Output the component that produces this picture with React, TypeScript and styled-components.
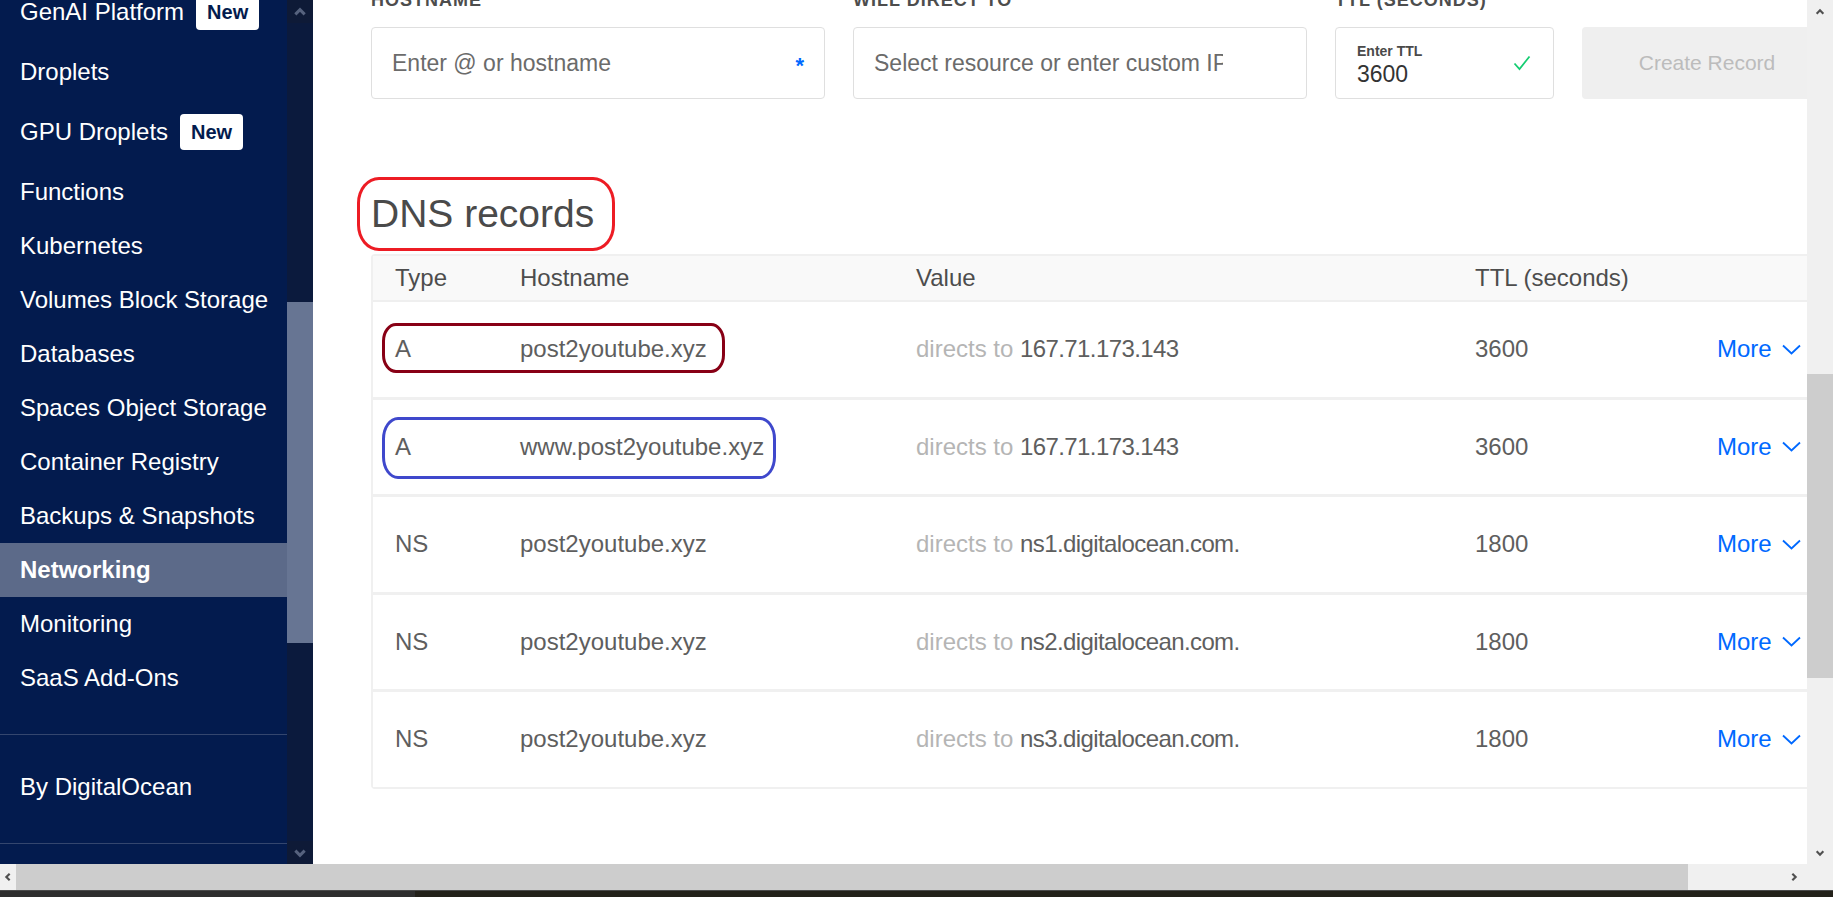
import React from "react";
import styled, { createGlobalStyle } from "styled-components";

const GlobalStyle = createGlobalStyle`
  html, body { margin: 0; padding: 0; width: 100%; height: 100%; overflow: hidden; }
  body { font-family: "Liberation Sans", Arial, sans-serif; background: #ffffff; }
  #root { height: 100%; }
  * { box-sizing: border-box; }
`;

const Screen = styled.div`
  width: 1833px;
  height: 897px;
  display: grid;
  grid-template-rows: 864px 26px 7px;
  overflow: hidden;
`;

const Top = styled.div`
  display: flex;
  min-height: 0;
  overflow: hidden;
`;

/* ---------- Sidebar ---------- */
const Sidebar = styled.nav`
  width: 287px;
  flex: none;
  background: #031b4e;
  color: #ffffff;
  overflow: hidden;
  display: flex;
  flex-direction: column;
`;

const NavList = styled.div`
  margin-top: -21px;
  display: flex;
  flex-direction: column;
  margin-bottom: 29px;
`;

const NavItem = styled.div<{ $tall?: boolean; $active?: boolean }>`
  height: ${(p) => (p.$tall ? 66 : 54)}px;
  flex: none;
  display: flex;
  align-items: center;
  padding-left: 20px;
  font-size: 24px;
  white-space: nowrap;
  font-weight: ${(p) => (p.$active ? 700 : 400)};
  background: ${(p) => (p.$active ? "#5c6a89" : "transparent")};
`;

const Badge = styled.span`
  margin-left: 12px;
  height: 36px;
  padding: 0 11px;
  display: inline-flex;
  align-items: center;
  background: #ffffff;
  color: #031b4e;
  font-weight: 700;
  font-size: 20px;
  border-radius: 4px;
`;

const NavSection = styled.div`
  border-top: 1px solid #34466e;
  border-bottom: 1px solid #34466e;
  padding: 25px 0 29px;
`;

/* ---------- Scrollbars ---------- */
const VTrack = styled.div<{ $bg: string }>`
  width: 26px;
  flex: none;
  background: ${(p) => p.$bg};
  display: flex;
  flex-direction: column;
  align-items: stretch;
`;

const ArrowBox = styled.div<{ $bg: string }>`
  height: 23px;
  flex: none;
  background: ${(p) => p.$bg};
  display: flex;
  align-items: center;
  justify-content: center;
`;

const VThumb = styled.div<{ $top: number; $h: number; $bg: string }>`
  margin-top: ${(p) => p.$top}px;
  height: ${(p) => p.$h}px;
  flex: none;
  background: ${(p) => p.$bg};
`;

const Spacer = styled.div`
  flex: 1;
`;

const HBar = styled.div`
  display: flex;
  background: #f0f0f0;
`;

const HArrow = styled.div<{ $w: number }>`
  width: ${(p) => p.$w}px;
  flex: none;
  display: flex;
  align-items: center;
  justify-content: center;
  overflow: hidden;
`;

const HThumb = styled.div`
  width: 1672px;
  flex: none;
  background: #cdcdcd;
`;

const Taskbar = styled.div`
  display: flex;
`;

const TaskSeg = styled.div<{ $w?: number; $bg: string }>`
  ${(p) => (p.$w ? `width: ${p.$w}px; flex: none;` : "flex: 1;")}
  background: ${(p) => p.$bg};
  border-top: 1px solid #4a4a4a;
`;

/* ---------- Main ---------- */
const Main = styled.main`
  flex: 1;
  min-width: 0;
  background: #ffffff;
  overflow: hidden;
  padding-left: 58px;
  display: flex;
  flex-direction: column;
  align-items: flex-start;
`;

const FormRow = styled.div`
  margin-top: -11px;
  display: flex;
  align-items: flex-end;
  gap: 28px;
  flex: none;
`;

const Field = styled.div<{ $w: number }>`
  width: ${(p) => p.$w}px;
  flex: none;
  display: flex;
  flex-direction: column;
`;

const Label = styled.div`
  font-size: 18px;
  line-height: 22px;
  font-weight: 700;
  letter-spacing: 1px;
  color: #4d4d4d;
  text-transform: uppercase;
  margin-bottom: 16px;
  white-space: nowrap;
`;

const InputBox = styled.div`
  height: 72px;
  border: 1px solid #dfdfdf;
  border-radius: 4px;
  display: flex;
  align-items: center;
  padding: 0 20px;
  background: #ffffff;
`;

const Placeholder = styled.span<{ $w?: number }>`
  font-size: 23px;
  color: #6b6b6b;
  white-space: nowrap;
  overflow: hidden;
  ${(p) => (p.$w ? `width: ${p.$w}px; flex: none;` : "flex: 1;")}
`;

const Asterisk = styled.span`
  color: #0069ff;
  font-size: 22px;
  font-weight: 700;
  margin-top: 6px;
`;

const TtlBox = styled(InputBox)`
  padding: 0 22px 0 21px;
  justify-content: space-between;
`;

const TtlStack = styled.div`
  display: flex;
  flex-direction: column;
  padding-top: 4px;
`;

const TtlCaption = styled.span`
  font-size: 14px;
  font-weight: 700;
  color: #4a4a4a;
  line-height: 18px;
`;

const TtlValue = styled.span`
  font-size: 23px;
  color: #333333;
  line-height: 28px;
`;

const CreateButton = styled.div`
  width: 250px;
  height: 72px;
  flex: none;
  background: #efefef;
  border-radius: 4px;
  display: flex;
  align-items: center;
  justify-content: center;
  color: #bcbcbc;
  font-size: 21px;
`;

const Heading = styled.h2`
  position: relative;
  margin: 91px 0 0;
  font-size: 39px;
  line-height: 47px;
  font-weight: 400;
  color: #4a4a4a;
  white-space: nowrap;
`;

const Annotation = styled.span<{ $color: string; $l: number; $t: number; $w: number; $h: number; $r: string }>`
  position: absolute;
  left: ${(p) => p.$l}px;
  top: ${(p) => p.$t}px;
  width: ${(p) => p.$w}px;
  height: ${(p) => p.$h}px;
  border: 3px solid ${(p) => p.$color};
  border-radius: ${(p) => p.$r};
  pointer-events: none;
`;

const Table = styled.div`
  margin-top: 17px;
  width: 1500px;
  flex: none;
  border: 2px solid #f0f0f0;
  border-radius: 4px;
  font-size: 24px;
`;

const GridRow = styled.div<{ $head?: boolean; $last?: boolean }>`
  position: relative;
  display: grid;
  grid-template-columns: 125px 396px 559px 242px 1fr;
  align-items: center;
  padding-left: 22px;
  height: ${(p) => (p.$head ? 46 : p.$last ? 94.5 : 97.5)}px;
  background: ${(p) => (p.$head ? "#f9f9f9" : "#ffffff")};
  border-bottom: ${(p) => (p.$head ? "2px solid #efefef" : p.$last ? "none" : "3px solid #f0f0f0")};
  color: ${(p) => (p.$head ? "#4d4d4d" : "#5e5e5e")};
  white-space: nowrap;
`;

const ValueCell = styled.span`
  letter-spacing: -0.6px;
`;

const Muted = styled.span`
  color: #b5b5b5;
  letter-spacing: 0;
`;

const MoreLink = styled.span`
  display: inline-flex;
  align-items: center;
  gap: 10px;
  color: #0069ff;
`;

const Chevron = ({ dir, color, size = 10 }: { dir: "up" | "down" | "left" | "right"; color: string; size?: number }) => {
  const pts: Record<string, string> = {
    up: "2,8 6,4 10,8",
    down: "2,4 6,8 10,4",
    left: "8,2 4,6 8,10",
    right: "4,2 8,6 4,10",
  };
  return (
    <svg width={size} height={size} viewBox="0 0 12 12">
      <polyline points={pts[dir]} fill="none" stroke={color} strokeWidth={2.6} strokeLinejoin="miter" />
    </svg>
  );
};

const MoreChevron = () => (
  <svg width="19" height="11" viewBox="0 0 19 11">
    <polyline points="1,1.5 9.5,9.5 18,1.5" fill="none" stroke="#0069ff" strokeWidth={1.8} />
  </svg>
);

const CheckIcon = () => (
  <svg width="18" height="16" viewBox="0 0 18 16">
    <polyline points="1.5,8.5 6.5,14 16.5,1.5" fill="none" stroke="#15cd72" strokeWidth={1.8} />
  </svg>
);

type NavDef = { label: string; badge?: boolean; active?: boolean };

const navItems: NavDef[] = [
  { label: "GenAI Platform", badge: true },
  { label: "Droplets" },
  { label: "GPU Droplets", badge: true },
  { label: "Functions" },
  { label: "Kubernetes" },
  { label: "Volumes Block Storage" },
  { label: "Databases" },
  { label: "Spaces Object Storage" },
  { label: "Container Registry" },
  { label: "Backups & Snapshots" },
  { label: "Networking", active: true },
  { label: "Monitoring" },
  { label: "SaaS Add-Ons" },
];

type Rec = { type: string; host: string; value: string; ttl: string };

const records: Rec[] = [
  { type: "A", host: "post2youtube.xyz", value: "167.71.173.143", ttl: "3600" },
  { type: "A", host: "www.post2youtube.xyz", value: "167.71.173.143", ttl: "3600" },
  { type: "NS", host: "post2youtube.xyz", value: "ns1.digitalocean.com.", ttl: "1800" },
  { type: "NS", host: "post2youtube.xyz", value: "ns2.digitalocean.com.", ttl: "1800" },
  { type: "NS", host: "post2youtube.xyz", value: "ns3.digitalocean.com.", ttl: "1800" },
];

export default function App() {
  return (
    <>
      <GlobalStyle />
      <Screen>
        <Top>
          <Sidebar>
            <NavList>
              {navItems.map((n) => (
                <NavItem key={n.label} $tall={n.badge} $active={n.active}>
                  {n.label}
                  {n.badge && <Badge>New</Badge>}
                </NavItem>
              ))}
            </NavList>
            <NavSection>
              <NavItem>By DigitalOcean</NavItem>
            </NavSection>
          </Sidebar>
          <VTrack $bg="#0b1a3d">
            <ArrowBox $bg="#0e1a37">
              <Chevron dir="up" color="#56627e" size={14} />
            </ArrowBox>
            <VThumb $top={279} $h={341} $bg="#677593" />
            <Spacer />
            <ArrowBox $bg="#0e1a37">
              <Chevron dir="down" color="#56627e" size={14} />
            </ArrowBox>
          </VTrack>

          <Main>
            <FormRow>
              <Field $w={454}>
                <Label>Hostname</Label>
                <InputBox>
                  <Placeholder>Enter @ or hostname</Placeholder>
                  <Asterisk>*</Asterisk>
                </InputBox>
              </Field>
              <Field $w={454}>
                <Label>Will direct to</Label>
                <InputBox>
                  <Placeholder $w={349}>Select resource or enter custom IP</Placeholder>
                </InputBox>
              </Field>
              <Field $w={219}>
                <Label>TTL (seconds)</Label>
                <TtlBox>
                  <TtlStack>
                    <TtlCaption>Enter TTL</TtlCaption>
                    <TtlValue>3600</TtlValue>
                  </TtlStack>
                  <CheckIcon />
                </TtlBox>
              </Field>
              <CreateButton>Create Record</CreateButton>
            </FormRow>

            <Heading>
              DNS records
              <Annotation $color="#ed1c24" $l={-14} $t={-13} $w={258} $h={74} $r="22px / 26px" />
            </Heading>

            <Table>
              <GridRow $head>
                <span>Type</span>
                <span>Hostname</span>
                <span>Value</span>
                <span>TTL (seconds)</span>
                <span />
              </GridRow>
              {records.map((r, i) => (
                <GridRow key={i} $last={i === records.length - 1}>
                  <span>{r.type}</span>
                  <span>{r.host}</span>
                  <ValueCell>
                    <Muted>directs to </Muted>
                    {r.value}
                  </ValueCell>
                  <span>{r.ttl}</span>
                  <MoreLink>
                    More <MoreChevron />
                  </MoreLink>
                  {i === 0 && (
                    <Annotation $color="#880015" $l={9} $t={21} $w={343} $h={50} $r="14px / 18px" />
                  )}
                  {i === 1 && (
                    <Annotation $color="#3f48cc" $l={9} $t={17} $w={394} $h={62} $r="16px / 22px" />
                  )}
                </GridRow>
              ))}
            </Table>
          </Main>

          <VTrack $bg="#f0f0f0">
            <ArrowBox $bg="#f0f0f0">
              <Chevron dir="up" color="#505050" />
            </ArrowBox>
            <VThumb $top={351} $h={304} $bg="#cdcdcd" />
            <Spacer />
            <ArrowBox $bg="#f0f0f0">
              <Chevron dir="down" color="#505050" />
            </ArrowBox>
          </VTrack>
        </Top>

        <HBar>
          <HArrow $w={16}>
            <Chevron dir="left" color="#505050" />
          </HArrow>
          <HThumb />
          <Spacer />
          <HArrow $w={26}>
            <Chevron dir="right" color="#505050" />
          </HArrow>
          <HArrow $w={26} />
        </HBar>

        <Taskbar>
          <TaskSeg $w={415} $bg="#2e2e2e" />
          <TaskSeg $bg="#23211a" />
        </Taskbar>
      </Screen>
    </>
  );
}
